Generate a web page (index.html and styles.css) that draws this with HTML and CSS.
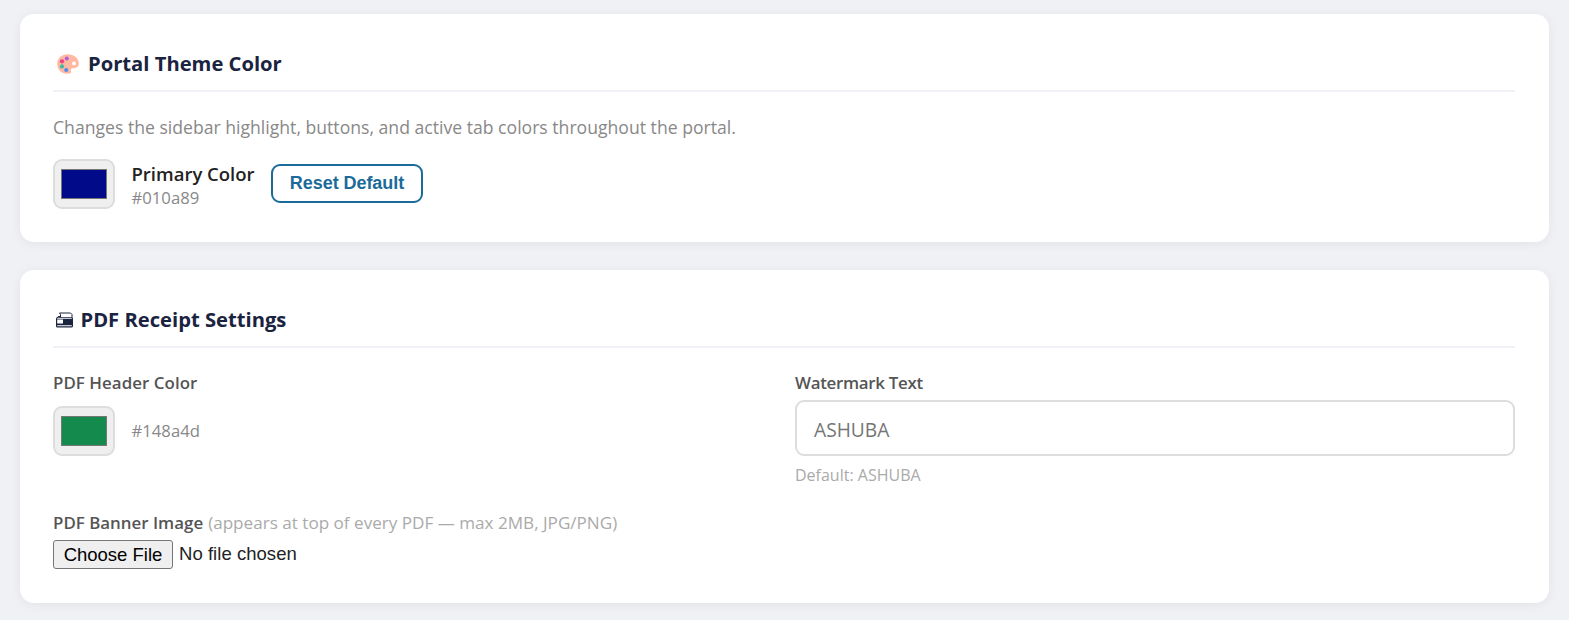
FILE: index.html
```html
<!DOCTYPE html>
<html lang="en">
<head>
<meta charset="utf-8">
<title>Portal Settings</title>
<link rel="stylesheet" href="styles.css">
</head>
<body>
<main class="page">
  <section class="card theme-card">
    <h2 class="card-title">
      <svg class="palette" viewBox="0 0 22 20" width="22" height="20" aria-hidden="true">
        <path fill="#ffb8a2" fill-rule="evenodd" d="M10.500 .2C4.600 .2 .2 4.500 .2 10c0 5.600 4.500 9.800 10 9.800 2 0 3.600-.4 3.800-1.600.2-1-.4-1.500-.2-2.600.2-1 1.100-1.500 2.300-1.400 3 .2 5.700-1.200 5.700-4.700C21.800 3.800 16.600 .2 10.500 .2zM17 7.500a1.900 1.900 0 1 1 0 3.800 1.900 1.900 0 0 1 0-3.800z"/>
        <circle cx="9.800" cy="4.400" r="2" fill="#b35be0"/>
        <circle cx="5" cy="7.300" r="2.100" fill="#ef3e86"/>
        <circle cx="5" cy="12.400" r="2.100" fill="#3fb8a4"/>
        <circle cx="9.200" cy="15.900" r="2" fill="#4a8cf0"/>
      </svg>
      <span class="t-portal">Portal Theme Color</span>
    </h2>
    <p class="description">Changes the sidebar highlight, buttons, and active tab colors throughout the portal.</p>
    <div class="color-row">
      <span class="swatch"><span class="swatch-fill navy"></span></span>
      <div class="color-info">
        <div class="color-name">Primary Color</div>
        <div class="hex">#010a89</div>
      </div>
      <button class="reset" type="button">Reset Default</button>
    </div>
  </section>

  <section class="card receipt-card">
    <h2 class="card-title">
      <svg class="printer" viewBox="0 0 17 16" width="17" height="16" aria-hidden="true">
        <path fill="none" stroke="#1a2340" stroke-width="1" d="M1 6l1.200-1.500h2.300M3.500 1h11l1.500 1.500V6M3.500 1l1 1.500V5.500"/>
        <path fill="#1a2340" d="M1.500 5.200h14A1.500 1.500 0 0 1 17 6.700v7.300a1.500 1.500 0 0 1-1.500 1.500h-14A1.500 1.500 0 0 1 0 14V6.700a1.500 1.500 0 0 1 1.500-1.500z"/>
        <path fill="#fff" d="M1.200 7.600h5.800v4H1.200zM1.200 13.200h14.600v1.100H1.200zM1.200 6h14.600v.7H1.200z"/>
      </svg>
      <span class="t-receipt">PDF Receipt Settings</span>
    </h2>
    <div class="grid">
      <div class="field">
        <div class="label l-header">PDF Header Color</div>
        <div class="color-row header-row">
          <span class="swatch"><span class="swatch-fill green"></span></span>
          <span class="hex">#148a4d</span>
        </div>
      </div>
      <div class="field">
        <label class="label l-water" for="watermark">Watermark Text</label>
        <input class="text-input" id="watermark" type="text" placeholder="ASHUBA">
        <div class="hint">Default: ASHUBA</div>
      </div>
    </div>
    <div class="banner-label"><span class="label l-banner">PDF Banner Image</span><span class="note">(appears at top of every PDF — max 2MB, JPG/PNG)</span></div>
    <div class="file-row"><button class="choose" type="button">Choose File</button><span class="no-file">No file chosen</span></div>
  </section>
</main>
</body>
</html>
```
FILE: styles.css
```css
* { box-sizing: border-box; }
body {
  margin: 0;
  background: #f0f1f5;
  font-family: "Open Sans", "Noto Sans", sans-serif;
  color: #222;
}
.page {
  height: 620px;
  padding: 14px 20px 0;
  display: flex;
  flex-direction: column;
  gap: 28px;
  overflow: hidden;
}
.card {
  background: #fff;
  border-radius: 14px;
  padding: 32px 34px 0 33px;
  box-shadow: 0 2px 12px rgba(0, 0, 0, .06);
  white-space: nowrap;
}
.theme-card { height: 228px; }
.receipt-card { height: 333px; }
.card-title {
  display: flex;
  align-items: center;
  height: 46px;
  margin: 0;
  padding-bottom: 9px;
  border-bottom: 2px solid #f0f1f6;
  font-size: 20.200px;
  line-height: 29px;
  font-weight: 700;
  color: #1a2340;
}
.palette { margin: 1px 9px 0 4px; }
.printer { margin: 1px 8px 0 2.500px; }
.description {
  margin: 22px 0 19px;
  font-size: 17.620px;
  line-height: 26px;
  color: #888;
}
.color-row { display: flex; align-items: center; height: 50px; }
.swatch {
  width: 62px;
  height: 50px;
  padding: 8px 6px;
  border: 2px solid #ddd;
  border-radius: 9px;
  background: #efefef;
  flex: none;
  display: flex;
}
.swatch-fill { flex: 1; border: 1px solid #777; }
.navy { background: #010a89; }
.green { background: #148a4d; }
.color-info { margin-left: 16.500px; width: 139.500px; padding-top: 2px; }
.color-name { font-size: 18.500px; font-weight: 600; line-height: 25px; color: #222; }
.hex { font-size: 16.700px; line-height: 24px; color: #888; }
.header-row .hex { margin-left: 16.500px; }
.reset {
  width: 152px;
  height: 39px;
  margin-bottom: 2px;
  padding: 0;
  border: 2px solid #1a6b9a;
  border-radius: 9px;
  background: #fff;
  color: #1a6b9a;
  font: 700 18px "Liberation Sans", Arial, sans-serif;
  letter-spacing: -.06px;
}
.grid { display: grid; grid-template-columns: 1fr 1fr; gap: 22px; margin-top: 23px; }
.label { display: block; font-size: 16.900px; font-weight: 600; line-height: 24px; color: #555; }
.l-header { letter-spacing: .05px; }
.l-water { letter-spacing: -.3px; }
.header-row { margin-top: 11px; }
.text-input {
  display: block;
  width: 100%;
  height: 56px;
  margin-top: 5px;
  padding: 3px 17px 0;
  border: 2px solid #ddd;
  border-radius: 9px;
  font: 19.200px "Open Sans", "Noto Sans", sans-serif;
  background: #fff;
}
.text-input::placeholder { color: #757575; opacity: 1; }
.hint { margin-top: 8px; font-size: 16px; line-height: 22px; color: #aaa; }
.banner-label { display: flex; gap: 5px; margin-top: 25px; line-height: 24px; }
.note { font-size: 17.100px; color: #aaa; }
.file-row {
  display: flex;
  align-items: center;
  gap: 6px;
  margin-top: 5px;
  font: 18.500px "Liberation Sans", Arial, sans-serif;
}
.no-file { padding-bottom: 1px; letter-spacing: .04px; }
.choose {
  width: 120px;
  height: 29px;
  padding: 0;
  border: 1px solid #767676;
  border-radius: 3px;
  background: #efefef;
  color: #000;
  font: inherit;
}
```
